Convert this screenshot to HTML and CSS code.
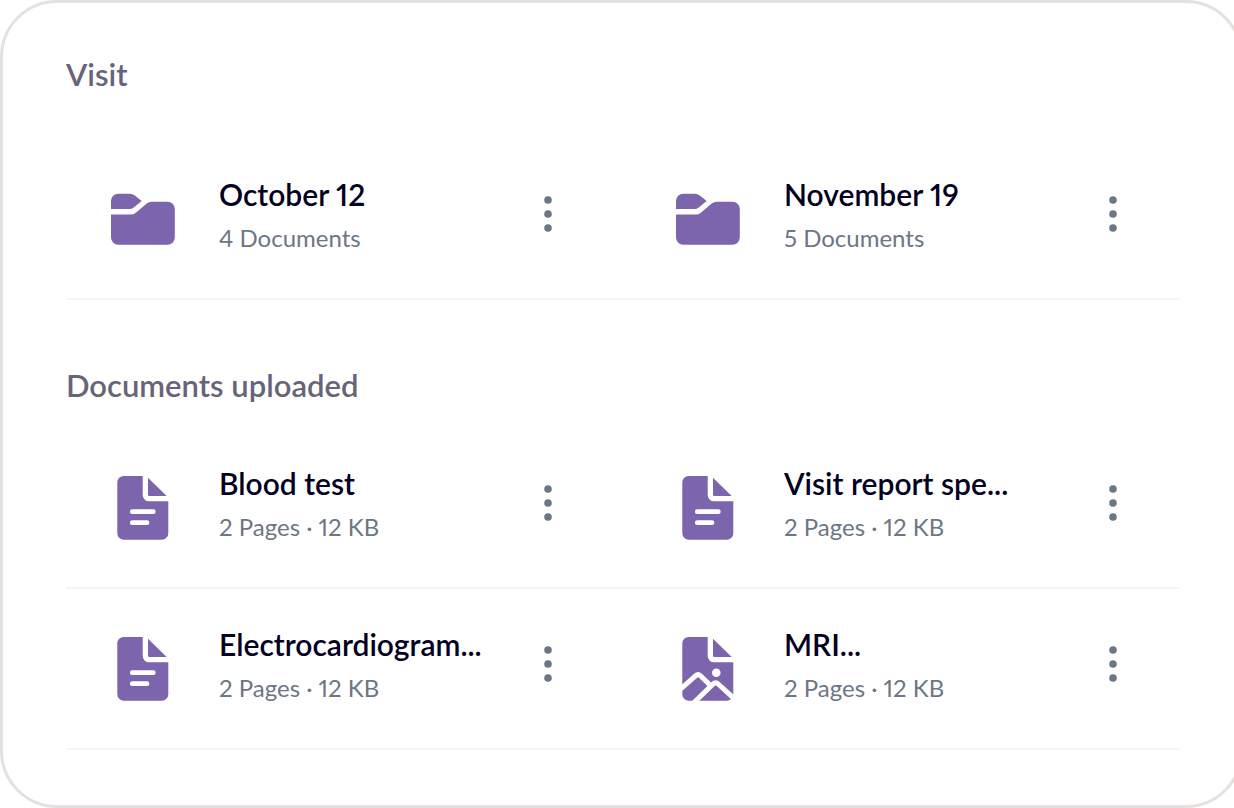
FILE: index.html
```html
<!DOCTYPE html>
<html lang="en">
<head>
<meta charset="utf-8">
<title>Documents</title>
<link rel="stylesheet" href="styles.css">
</head>
<body>
<svg class="sprite" aria-hidden="true">
  <symbol id="folder" viewBox="0 0 64 64">
    <path d="M0 22V14a7.300 7.300 0 0 1 7.300-7.300H19q2.500 0 4.500 1.500L30.700 14l-8 6.500Q21 22 18.500 22Z"/>
    <path d="M0 27.500H20q2.500 0 4.500-1.600L36 16.300Q38 14.700 40.500 14.700H56.500a7.300 7.300 0 0 1 7.300 7.300V50.500a7.300 7.300 0 0 1-7.300 7.300H7.300A7.300 7.300 0 0 1 0 50.500Z"/>
  </symbol>
  <symbol id="file" viewBox="0 0 64 64">
    <path fill-rule="evenodd" d="M12.700 0H31.700V19a6.300 6.300 0 0 0 6.300 6.300H57.300V57.300a6.400 6.400 0 0 1-6.400 6.400H12.700a6.400 6.400 0 0 1-6.400-6.400V6.400A6.400 6.400 0 0 1 12.700 0ZM21.300 33.300a2.400 2.400 0 0 0 0 4.800H42.300a2.400 2.400 0 0 0 0-4.800ZM21.300 44.300a2.400 2.400 0 0 0 0 4.800H36a2.400 2.400 0 0 0 0-4.800Z"/>
    <path d="M37 1.700 55.700 20H38.500A1.500 1.500 0 0 1 37 18.500Z"/>
  </symbol>
  <symbol id="image" viewBox="0 0 64 64">
    <path d="M12.700 0H31.700V19a6.300 6.300 0 0 0 6.300 6.300H57.300V57.300a6.400 6.400 0 0 1-6.400 6.400H12.700a6.400 6.400 0 0 1-6.400-6.400V6.400A6.400 6.400 0 0 1 12.700 0Z"/>
    <path d="M37 1.700 55.700 20H38.500A1.500 1.500 0 0 1 37 18.500Z"/>
    <circle class="cut" cx="40.300" cy="35.700" r="4.300"/>
    <path class="cut-line" d="M3 53.500 19.500 38.800Q22 36.600 24.500 38.800L34 48M16.500 67 36.800 47.200Q39.500 44.600 42.200 47L61 64.200"/>
  </symbol>
  <symbol id="dots" viewBox="0 0 8 36">
    <circle cx="4" cy="4" r="3.800"/><circle cx="4" cy="18" r="3.800"/><circle cx="4" cy="32" r="3.800"/>
  </symbol>
</svg>
<main class="card">
  <section class="section visits">
    <h2 class="heading">Visit</h2>
    <ul class="row">
      <li class="item">
        <svg class="icon" aria-hidden="true"><use href="#folder"/></svg>
        <div class="text"><h3 class="title">October 12</h3><p class="meta">4 Documents</p></div>
        <button class="menu" type="button" aria-label="Options for October 12"><svg class="dots" aria-hidden="true"><use href="#dots"/></svg></button>
      </li>
      <li class="item">
        <svg class="icon" aria-hidden="true"><use href="#folder"/></svg>
        <div class="text"><h3 class="title">November 19</h3><p class="meta">5 Documents</p></div>
        <button class="menu" type="button" aria-label="Options for November 19"><svg class="dots" aria-hidden="true"><use href="#dots"/></svg></button>
      </li>
    </ul>
  </section>
  <section class="section">
    <h2 class="heading">Documents uploaded</h2>
    <ul class="row">
      <li class="item">
        <svg class="icon" aria-hidden="true"><use href="#file"/></svg>
        <div class="text"><h3 class="title">Blood test</h3><p class="meta">2 Pages · 12 KB</p></div>
        <button class="menu" type="button" aria-label="Options for Blood test"><svg class="dots" aria-hidden="true"><use href="#dots"/></svg></button>
      </li>
      <li class="item">
        <svg class="icon" aria-hidden="true"><use href="#file"/></svg>
        <div class="text"><h3 class="title">Visit report spe...</h3><p class="meta">2 Pages · 12 KB</p></div>
        <button class="menu" type="button" aria-label="Options for Visit report"><svg class="dots" aria-hidden="true"><use href="#dots"/></svg></button>
      </li>
    </ul>
    <ul class="row">
      <li class="item">
        <svg class="icon" aria-hidden="true"><use href="#file"/></svg>
        <div class="text"><h3 class="title">Electrocardiogram...</h3><p class="meta">2 Pages · 12 KB</p></div>
        <button class="menu" type="button" aria-label="Options for Electrocardiogram"><svg class="dots" aria-hidden="true"><use href="#dots"/></svg></button>
      </li>
      <li class="item">
        <svg class="icon" aria-hidden="true"><use href="#image"/></svg>
        <div class="text"><h3 class="title">MRI...</h3><p class="meta">2 Pages · 12 KB</p></div>
        <button class="menu" type="button" aria-label="Options for MRI"><svg class="dots" aria-hidden="true"><use href="#dots"/></svg></button>
      </li>
    </ul>
  </section>
</main>
</body>
</html>
```

FILE: styles.css
```css
* {
  box-sizing: border-box;
}

body {
  margin: 0;
  background: #fff;
  font-family: Lato, "Open Sans", sans-serif;
  font-variant-numeric: proportional-nums;
  overflow-x: hidden;
}

h2, h3, p, ul {
  margin: 0;
  padding: 0;
}

.sprite {
  display: none;
}

.card {
  margin-right: -9px;
  padding: 51px 60px 55px 63px;
  border: 3px solid #e5e1dd;
  border-radius: 57px;
  background: #fff;
}

.section {
  display: flex;
  flex-direction: column;
}

.visits {
  margin-bottom: 65px;
}

.heading {
  margin-bottom: 23px;
  color: #67647a;
  font-size: 31px;
  font-weight: 600;
  line-height: 40px;
}

.visits .heading {
  margin-bottom: 45px;
}

.row {
  display: grid;
  grid-template-columns: 1fr 1fr;
  column-gap: 16px;
  border-bottom: 2px solid #f5f5f5;
  list-style: none;
}

.item {
  display: flex;
  align-items: flex-start;
  min-width: 0;
  padding: 35px 45px 44px;
}

.icon {
  flex: none;
  width: 64px;
  height: 64px;
  margin: 13px 44px 0 0;
  fill: #7c65ac;
}

.cut {
  fill: #fff;
}

.cut-line {
  fill: none;
  stroke: #fff;
  stroke-width: 5px;
}

.text {
  display: flex;
  flex: 1;
  flex-direction: column;
  gap: 8px;
  min-width: 0;
  white-space: nowrap;
}

.title {
  color: #03001f;
  font-size: 30px;
  font-weight: 600;
  line-height: 40px;
}

.meta {
  color: #6d7685;
  font-size: 24px;
  line-height: 32px;
}

.menu {
  display: flex;
  flex: none;
  align-items: center;
  align-self: center;
  justify-content: center;
  width: 44px;
  height: 44px;
  padding: 0;
  border: 0;
  background: none;
  cursor: pointer;
}

.dots {
  width: 8px;
  height: 36px;
  fill: #6d7685;
}
```
